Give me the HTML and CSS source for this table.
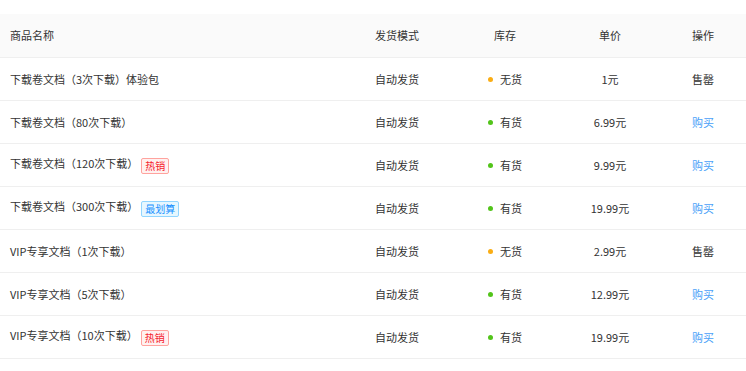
FILE: index.html
```html
<!DOCTYPE html>
<html>
  <head>
    <meta charset="UTF-8" />
    <title>商品列表</title>
    <link rel="stylesheet" href="styles.css">
  </head>
  <body>
    <div class="wrap">
      <table class="goods">
        <colgroup>
          <col class="c-name" />
          <col class="c-mode" />
          <col class="c-stock" />
          <col class="c-price" />
          <col class="c-op" />
        </colgroup>
        <thead>
          <tr>
            <th>商品名称</th>
            <th>发货模式</th>
            <th class="center">库存</th>
            <th class="center">单价</th>
            <th class="center">操作</th>
          </tr>
        </thead>
        <tbody>
          <tr>
            <td>下载卷文档（3次下载）体验包</td>
            <td>自动发货</td>
            <td class="center"><span class="dot warn"></span>无货</td>
            <td class="center">1元</td>
            <td class="center">售罄</td>
          </tr>
          <tr>
            <td>下载卷文档（80次下载）</td>
            <td>自动发货</td>
            <td class="center"><span class="dot ok"></span>有货</td>
            <td class="center">6.99元</td>
            <td class="center"><a class="buy" href="#">购买</a></td>
          </tr>
          <tr>
            <td>下载卷文档（120次下载）<span class="tag hot">热销</span></td>
            <td>自动发货</td>
            <td class="center"><span class="dot ok"></span>有货</td>
            <td class="center">9.99元</td>
            <td class="center"><a class="buy" href="#">购买</a></td>
          </tr>
          <tr>
            <td>下载卷文档（300次下载）<span class="tag deal">最划算</span></td>
            <td>自动发货</td>
            <td class="center"><span class="dot ok"></span>有货</td>
            <td class="center">19.99元</td>
            <td class="center"><a class="buy" href="#">购买</a></td>
          </tr>
          <tr>
            <td>VIP专享文档（1次下载）</td>
            <td>自动发货</td>
            <td class="center"><span class="dot warn"></span>无货</td>
            <td class="center">2.99元</td>
            <td class="center">售罄</td>
          </tr>
          <tr>
            <td>VIP专享文档（5次下载）</td>
            <td>自动发货</td>
            <td class="center"><span class="dot ok"></span>有货</td>
            <td class="center">12.99元</td>
            <td class="center"><a class="buy" href="#">购买</a></td>
          </tr>
          <tr>
            <td>VIP专享文档（10次下载）<span class="tag hot">热销</span></td>
            <td>自动发货</td>
            <td class="center"><span class="dot ok"></span>有货</td>
            <td class="center">19.99元</td>
            <td class="center"><a class="buy" href="#">购买</a></td>
          </tr>
        </tbody>
      </table>
    </div>
  </body>
</html>
```

FILE: styles.css
```css
* {
  box-sizing: border-box;
}
body {
  margin: 0;
  background: #fff;
  font-family: "Microsoft YaHei", "Noto Sans CJK SC", sans-serif;
  font-size: 11px;
  color: #333;
}
.wrap {
  padding-top: 14px;
}
.goods {
  width: 100%;
  border-collapse: collapse;
  table-layout: fixed;
}
.c-name {
  width: 365px;
}
.c-mode {
  width: 85px;
}
.c-stock {
  width: 110px;
}
.c-price {
  width: 100px;
}
.c-op {
  width: 86px;
}
th,
td {
  height: 43px;
  padding: 0 10px;
  text-align: left;
  font-weight: normal;
  border-bottom: 1px solid #efefef;
  white-space: nowrap;
}
th {
  background: #fafafa;
  color: #333;
}
.center {
  text-align: center;
}
.dot {
  display: inline-block;
  width: 5px;
  height: 5px;
  border-radius: 50%;
  margin-right: 7px;
  vertical-align: middle;
  position: relative;
  top: -1px;
}
.dot.ok {
  background: #52c41a;
}
.dot.warn {
  background: #faad14;
}
.buy {
  color: #4a9ff8;
  text-decoration: none;
}
.tag {
  display: inline-block;
  margin-left: 3px;
  padding: 0 3px;
  height: 16px;
  line-height: 14px;
  font-size: 10px;
  border: 1px solid;
  border-radius: 2px;
  vertical-align: middle;
}
.tag.hot {
  color: #f5222d;
  background: #fff1f0;
  border-color: #ffa39e;
}
.tag.deal {
  color: #1890ff;
  background: #e6f7ff;
  border-color: #91d5ff;
}
```
